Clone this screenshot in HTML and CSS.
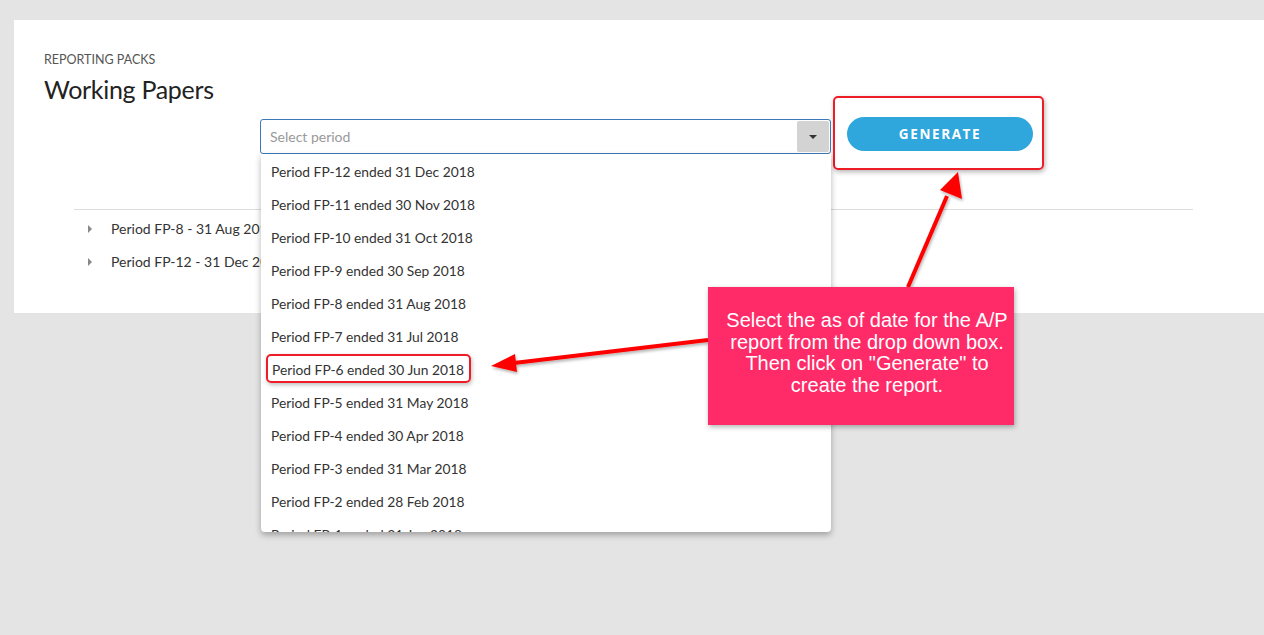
FILE: index.html
```html
<!DOCTYPE html>
<html lang="en">

<head>
    <meta charset="UTF-8">
    <meta name="viewport" content="width=device-width, initial-scale=1.0">
    <title>Working Papers</title>
    <link rel="stylesheet" href="styles.css">
</head>

<body>
    <div class="page">
        <div class="card">
            <div class="crumb">REPORTING PACKS</div>
            <h1 class="title">Working Papers</h1>

            <div class="toolbar">
                <div class="select-wrap">
                    <div class="select">
                        <span class="placeholder">Select period</span>
                        <span class="select-btn"><span class="caret-down"></span></span>
                    </div>
                    <ul class="options">
                        <li>Period FP-12 ended 31 Dec 2018</li>
                        <li>Period FP-11 ended 30 Nov 2018</li>
                        <li>Period FP-10 ended 31 Oct 2018</li>
                        <li>Period FP-9 ended 30 Sep 2018</li>
                        <li>Period FP-8 ended 31 Aug 2018</li>
                        <li>Period FP-7 ended 31 Jul 2018</li>
                        <li><span class="mark">Period FP-6 ended 30 Jun 2018</span></li>
                        <li>Period FP-5 ended 31 May 2018</li>
                        <li>Period FP-4 ended 30 Apr 2018</li>
                        <li>Period FP-3 ended 31 Mar 2018</li>
                        <li>Period FP-2 ended 28 Feb 2018</li>
                        <li>Period FP-1 ended 31 Jan 2018</li>
                    </ul>
                </div>
                <div class="btn-frame">
                    <button type="button" class="generate">GENERATE</button>
                </div>
            </div>

            <div class="tree">
                <div class="tree-row"><span class="caret-right"></span>Period FP-8 - 31 Aug 2018</div>
                <div class="tree-row"><span class="caret-right"></span>Period FP-12 - 31 Dec 2018</div>
            </div>
        </div>
    </div>

    <!-- annotation overlay -->
    <svg class="arrows" width="1264" height="635" viewBox="0 0 1264 635">
        <defs>
            <filter id="sh" x="-20%" y="-20%" width="140%" height="140%">
                <feDropShadow dx="1" dy="2" stdDeviation="1.5" flood-color="#000" flood-opacity="0.3"/>
            </filter>
        </defs>
        <g filter="url(#sh)" fill="#ff0000" stroke="#ff0000">
            <line x1="908" y1="287" x2="947" y2="196" stroke-width="4"/>
            <polygon points="958,172 962,199 940,190" stroke="none"/>
            <line x1="708" y1="340" x2="514" y2="363" stroke-width="4"/>
            <polygon points="491,366 515,354 517,372" stroke="none"/>
        </g>
    </svg>

    <div class="callout">
        Select the as of date for the A/P<br>
        report from the drop down box.<br>
        Then click on "Generate" to<br>
        create the report.
    </div>
</body>

</html>
```

FILE: styles.css
```css
* {
    box-sizing: border-box;
}

body {
    margin: 0;
    background-color: #e4e4e4;
    font-family: "Lato", "Open Sans", sans-serif;
    color: #333;
    height: 635px;
    overflow: hidden;
}

.page {
    padding: 20px 0 0 14px;
}

.card {
    background-color: white;
    height: 293px;
    padding: 33px 71px 0 30px;
}

.crumb {
    font-size: 12.5px;
    color: #555;
    line-height: 14px;
}

.title {
    margin: 6px 0 0 0;
    font-size: 25px;
    font-weight: normal;
    color: #222;
    line-height: 32px;
    letter-spacing: -0.3px;
}

/* select + button row */
.toolbar {
    display: flex;
    align-items: flex-start;
    margin-left: 216px;
    margin-top: 12px;
}

.select-wrap {
    position: relative;
    width: 571px;
    margin-top: 2px;
}

.select {
    display: flex;
    align-items: center;
    justify-content: space-between;
    height: 35px;
    border: 1px solid #3a78b8;
    border-radius: 3px;
    padding: 1px 1px 1px 9px;
}

.placeholder {
    font-size: 14px;
    color: #999;
}

.select-btn {
    width: 32px;
    height: 31px;
    background-color: #d3d3d3;
    border-radius: 2px;
    display: flex;
    align-items: center;
    justify-content: center;
}

.caret-down {
    width: 0;
    height: 0;
    border-left: 4px solid transparent;
    border-right: 4px solid transparent;
    border-top: 4px solid #333;
}

.options {
    position: absolute;
    top: 35px;
    left: 1px;
    right: 0;
    height: 378px;
    margin: 0;
    padding: 1px 0 0 0;
    list-style: none;
    background-color: white;
    border-radius: 0 0 4px 4px;
    box-shadow: 0 3px 6px rgba(0, 0, 0, 0.3);
    overflow: hidden;
    z-index: 5;
}

.options li {
    height: 33px;
    line-height: 33px;
    padding-left: 10px;
    font-size: 13.8px;
    color: #333;
    white-space: nowrap;
}

.mark {
    display: inline-block;
    margin-left: -5px;
    padding: 0 5px 0 4px;
    height: 29px;
    line-height: 27px;
    border: 2px solid #ee1c25;
    border-radius: 5px;
    box-shadow: 1px 2px 4px rgba(0, 0, 0, 0.25);
}

.btn-frame {
    margin-left: 2px;
    margin-top: -21px;
    width: 211px;
    height: 74px;
    border: 2px solid #ee1c25;
    border-radius: 5px;
    box-shadow: 1px 2px 5px rgba(0, 0, 0, 0.3);
    padding: 19px 0 0 12px;
}

.generate {
    width: 186px;
    height: 34px;
    border: none;
    border-radius: 17px;
    background-color: #2fa6dc;
    color: white;
    font-family: "Open Sans", sans-serif;
    font-size: 13.5px;
    font-weight: bold;
    letter-spacing: 1.6px;
    cursor: pointer;
}

/* tree list */
.tree {
    margin: 39px 0 0 30px;
    border-top: 1px solid #ddd;
    padding-top: 2px;
}

.tree-row {
    display: flex;
    align-items: center;
    height: 33px;
    font-size: 14px;
    color: #333;
    padding-left: 14px;
}

.caret-right {
    width: 0;
    height: 0;
    border-top: 4px solid transparent;
    border-bottom: 4px solid transparent;
    border-left: 4px solid #888;
    margin-right: 19px;
}

/* annotations */
.arrows {
    position: absolute;
    top: 0;
    left: 0;
    z-index: 8;
    pointer-events: none;
}

.callout {
    position: absolute;
    left: 708px;
    top: 287px;
    width: 306px;
    height: 138px;
    padding: 23px 0 0 12px;
    background-color: #ff2a68;
    color: white;
    font-family: "Liberation Sans", Arial, sans-serif;
    font-size: 20px;
    line-height: 21.5px;
    text-align: center;
    box-shadow: 1px 2px 5px rgba(0, 0, 0, 0.3);
    z-index: 9;
}
```
